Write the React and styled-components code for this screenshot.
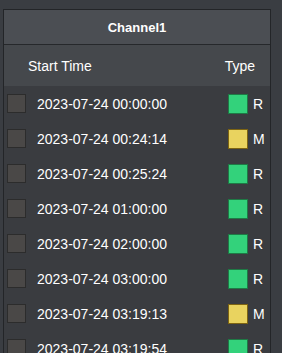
import React from 'react'
import styled, { createGlobalStyle } from 'styled-components'

const rows = [
  { time: '2023-07-24 00:00:00', type: 'R' },
  { time: '2023-07-24 00:24:14', type: 'M' },
  { time: '2023-07-24 00:25:24', type: 'R' },
  { time: '2023-07-24 01:00:00', type: 'R' },
  { time: '2023-07-24 02:00:00', type: 'R' },
  { time: '2023-07-24 03:00:00', type: 'R' },
  { time: '2023-07-24 03:19:13', type: 'M' },
  { time: '2023-07-24 03:19:54', type: 'R' },
]

const App = () => {
  return (
    <Page>
      <Global />
      <Panel>
        <Title>Channel1</Title>
        <Header>
          <span>Start Time</span>
          <span>Type</span>
        </Header>
        {rows.map((r, i) => (
          <Row key={i}>
            <Check />
            <Time>{r.time}</Time>
            <TypeCell>
              <Swatch $kind={r.type} />
              {r.type}
            </TypeCell>
          </Row>
        ))}
      </Panel>
    </Page>
  )
}

export default App

const Global = createGlobalStyle`
  html, body {
    margin: 0;
    background: #3a3d42;
    overflow: hidden;
  }
  body {
    font-family: "Liberation Sans", Arial, sans-serif;
    color: #ffffff;
  }
`

const Page = styled.div`
  padding: 9px 11px 0 3px;
`

const Panel = styled.div`
  width: 268px;
  box-sizing: border-box;
  border: 1px solid #232528;
  border-bottom: none;
  background: #3a3c40;
`

const Title = styled.div`
  height: 34px;
  display: flex;
  align-items: center;
  justify-content: center;
  background: #4b4e53;
  border-bottom: 1px solid #26282b;
  font-size: 13px;
  font-weight: bold;
`

const Header = styled.div`
  height: 41px;
  display: flex;
  align-items: center;
  justify-content: space-between;
  padding: 0 15px 0 24px;
  background: #45484c;
  font-size: 14px;
`

const Row = styled.div`
  height: 35px;
  display: flex;
  align-items: center;
  padding: 0 0 0 3px;
  font-size: 14px;
`

const Check = styled.div`
  width: 19px;
  height: 19px;
  box-sizing: border-box;
  border: 1px solid #2c2c2c;
  background: #4a4847;
  margin-bottom: 1px;
`

const Time = styled.span`
  margin-left: 11px;
  flex: 1;
`

const TypeCell = styled.span`
  display: flex;
  align-items: center;
  width: 42px;
  gap: 5px;
`

const Swatch = styled.span`
  width: 20px;
  height: 20px;
  box-sizing: border-box;
  border: 1px solid ${p => (p.$kind === 'M' ? '#7d6412' : '#1e7a45')};
  background: ${p => (p.$kind === 'M' ? '#e9d35f' : '#33d27b')};
`
